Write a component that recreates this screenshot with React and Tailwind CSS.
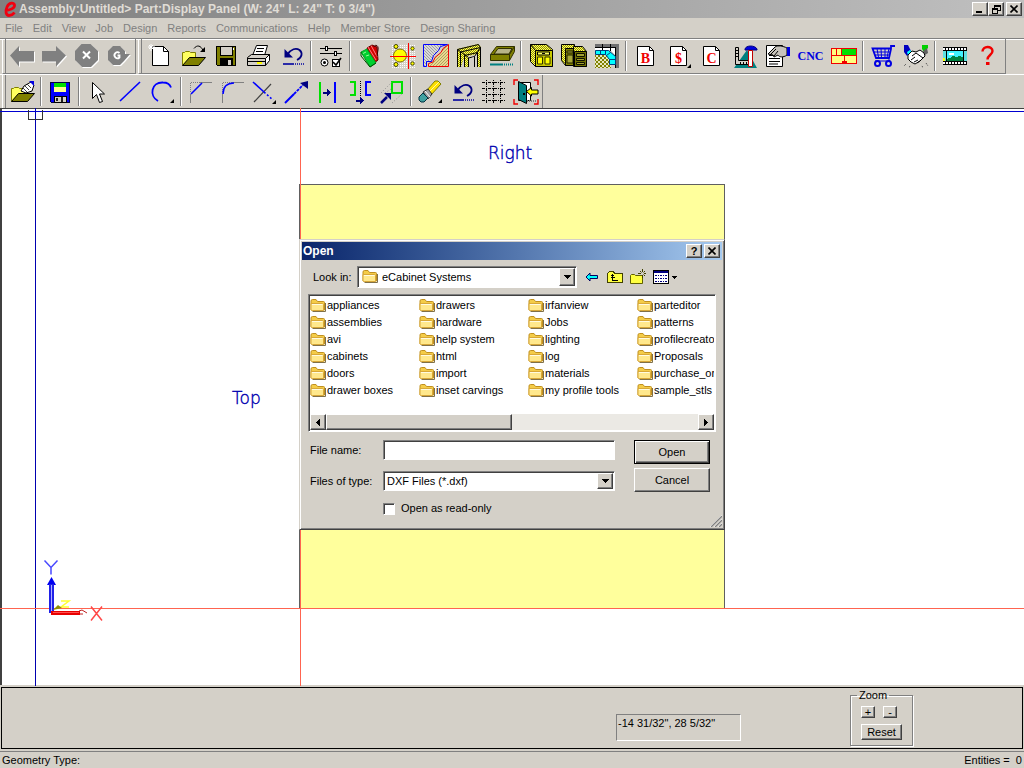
import React from 'react';

const raised =
  'bg-[#d4d0c8] border border-t-white border-l-white border-r-[#404040] border-b-[#404040] shadow-[inset_-1px_-1px_0_#808080]';
const sunken =
  'bg-white border border-t-[#808080] border-l-[#808080] border-r-white border-b-white shadow-[inset_1px_1px_0_#404040]';

function Icon({ children, smooth }) {
  return (
    <svg
      viewBox="0 0 26 26"
      className="size-[26px] shrink-0"
      fill="none"
      shapeRendering={smooth ? 'auto' : 'crispEdges'}
      aria-hidden="true"
    >
      {children}
    </svg>
  );
}

function Disabled({ d, children }) {
  return (
    <Icon smooth>
      <path d={d} fill="#fff" transform="translate(1 1)" />
      <path d={d} fill="#808080" />
      {children}
    </Icon>
  );
}

const UndoIcon = (
  <Icon smooth>
    <path d="M5.500 6v8.500h8.500z" fill="#000080" />
    <path d="M8.500 11.500C12 6 17 4.500 20.500 7c3.500 3 2.500 7.500-2.500 10" stroke="#000080" strokeWidth="1.800" />
    <path d="M4 21h11" stroke="#0000a0" strokeWidth="1.600" />
    <path d="M16 21h9" stroke="#0000a0" strokeWidth="1.600" strokeDasharray="1 1" />
  </Icon>
);

function PageIcon({ letter, drop }) {
  return (
    <Icon smooth>
      <path d="M4.500 3.500h12l4 4v15h-16z" fill="#fff" stroke="#000" />
      <path d="M16.500 3.500v4h4" stroke="#000" />
      <text
        x="12.500"
        y="19.500"
        textAnchor="middle"
        fill="#f00000"
        className="font-['Liberation_Serif',serif] text-[14px] font-bold"
      >
        {letter}
      </text>
      {drop && <path d="M25 21v4h-4z" fill="#000" />}
    </Icon>
  );
}

const navTools = [
  ['Back', <Disabled d="M1 12.500L10 3v5h15v10.500H10v5z" />],
  ['Forward', <Disabled d="M25 12.500L15 3v5H1v10.500h14v5z" />],
  [
    'Stop',
    <Disabled d="M8.500 1h9L25 8v9l-7 7H9l-7-7V8z">
      <path d="M10 8.500l7 7M17 8.500l-7 7" stroke="#fff" strokeWidth="2" />
    </Disabled>,
  ],
  [
    'Refresh',
    <Disabled d="M8 3h7l5 5v3h5l-6 7-4 4H8l-5-5V8z">
      <path d="M14.500 10a3 3 0 1 0 0 4.500v-2h-2" stroke="#fff" strokeWidth="1.800" />
    </Disabled>,
  ],
];

const OpenBase = (
  <>
    <path d="M2.500 22.500v-13h2l1-1h4l1 1h5v5" fill="#ffff60" stroke="#808000" />
    <path d="M2.500 22.500l7-8h16l-7 8z" fill="#808000" stroke="#000" />
  </>
);

const mainTools = [
  [
    'New',
    <Icon smooth>
      <path d="M5.500 3.500h11l5 5v14h-16z" fill="#fff" stroke="#000" />
      <path d="M16.500 3.500v5h5" stroke="#000" />
      <path d="M4 1v7M1 4h7M2 2l4 4M6 2L2 6" stroke="#fff" />
    </Icon>,
  ],
  [
    'Open',
    <Icon smooth>
      {OpenBase}
      <path d="M14 5.500c3-4 7-3 9 2" stroke="#000" />
      <path d="M25 4v5h-5z" fill="#000" />
    </Icon>,
  ],
  [
    'Save',
    <Icon>
      <path d="M3.500 3.500h19v19h-18l-1-1z" fill="#808000" stroke="#000" />
      <path d="M7 3h12v9H7z" fill="#d4d0c8" stroke="#000" />
      <path d="M7 15h13v8H7z" fill="#000" />
      <path d="M15 17h3v5h-3z" fill="#d4d0c8" />
      <path d="M20 5h1v2h-1z" fill="#fff" />
    </Icon>,
  ],
  [
    'Print',
    <Icon smooth>
      <path d="M6.500 12.500l4-10h11l-3 10z" fill="#fff" stroke="#000" />
      <path d="M11 5.500h7M10 8.500h7" stroke="#000" />
      <path d="M1.500 14.500l4-3h18l-4 4v7h-18z" fill="#d4d0c8" stroke="#000" />
      <path d="M23.500 11.500v6l-4 5v-7zM1.500 15.500h18" fill="#fff" stroke="#000" />
      <path d="M2 18.500h17" stroke="#000" />
      <path d="M11 19h5v2h-5z" fill="#ff0" />
    </Icon>,
  ],
  ['Undo', UndoIcon],
  null,
  [
    'Options',
    <Icon>
      <path d="M2 5.500h22M2 10.500h22" stroke="#000" />
      <path d="M7.500 3.500h2v4h-2zM16.500 8.500h2v4h-2z" fill="#fff" stroke="#000" />
      <g shapeRendering="auto">
        <circle cx="6.500" cy="19.500" r="3.500" fill="#fff" stroke="#000" />
        <circle cx="6.500" cy="19.500" r="1.500" fill="#000" />
      </g>
      <path d="M14.500 16.500h7v7h-7z" fill="#fff" stroke="#000" />
      <path d="M15 19l3 3 5-7" stroke="#000" strokeWidth="1.600" shapeRendering="auto" />
    </Icon>,
  ],
  null,
  [
    'Materials',
    <Icon smooth>
      <path d="M10 5l5-3 5 2 1 13-5 4z" fill="#d00000" stroke="#600" />
      <path d="M11 4l8 13M14 2.500l6 11" stroke="#ff8080" />
      <path d="M17 4c1-3 5-2 4 3l-1 6" stroke="#400" />
      <path d="M4 9l6-3 9 14-6 4z" fill="#00d030" stroke="#00a020" />
      <path d="M4 9v4l9 11 6-4" stroke="#005000" />
      <path d="M6 10.500l3-1.500M9 13l3-1" stroke="#90ff90" />
    </Icon>,
  ],
  [
    'Hardware',
    <Icon smooth>
      <path d="M1 1h24v24H1z" fill="url(#dots)" />
      <circle cx="10" cy="12.500" r="6.500" fill="#ff0" stroke="#807000" />
      <circle cx="6" cy="3.500" r="2" fill="#ff0" stroke="#404000" />
      <circle cx="6" cy="21.500" r="2" fill="#ff0" stroke="#404000" />
      <circle cx="22.500" cy="5.500" r="1.700" fill="#ff0" stroke="#404000" />
      <circle cx="22.500" cy="20.500" r="1.700" fill="#ff0" stroke="#404000" />
      <path d="M18.500 0v26M0 13.500h26" stroke="#f00" />
    </Icon>,
  ],
  [
    'Profile',
    <Icon smooth>
      <path d="M.500 1.500h24l-7 2-2 4-5 5-2 6h-5v5h-3z" fill="url(#hatchGray)" stroke="#0000ff" />
      <path d="M25.500 1.500v22H5.500V20.500l4.500-1.500 2-4.500 6-5 2-4z" fill="url(#hatchTan)" stroke="#f00000" />
    </Icon>,
  ],
  [
    'Doors',
    <Icon smooth>
      <path d="M1 6L22 1l3 3v20h-4V11l-9 2v11H8v-9L5 24H2z" fill="url(#hatchYellow)" />
      <path d="M1.500 24V6.500l21-5M4.500 24V9l20-4.500V24M8.500 24V12.500l13-3V24M12.500 24v-9l6-1.500V24M1.500 6.500l11 8M22.500 1.500l2 3-6 9" stroke="#000" />
      <path d="M13 16l5-2v10h-5z" fill="#d4d0c8" />
    </Icon>,
  ],
  [
    'Drawer',
    <Icon smooth>
      <path d="M1.500 11.500l6-8h18v5l-5 9h-19z" fill="#808000" stroke="#303000" />
      <path d="M5 11l4-5.500h14L20 11z" fill="#b8b488" stroke="#303000" />
      <path d="M1.500 11.500h19v6M20.500 11.500l5-8" stroke="#303000" />
      <path d="M1 21.500h13" stroke="#008080" strokeWidth="2" />
      <path d="M15 21.500h10" stroke="#008080" strokeWidth="2" strokeDasharray="1 1" />
    </Icon>,
  ],
  null,
  [
    'Cabinet',
    <Icon smooth>
      <path d="M2.500 1.500h16l6 5v17h-17l-5-5z" fill="url(#hatchYellow)" stroke="#000" />
      <path d="M7.500 7.500h17v16h-17z" fill="#c8c800" stroke="#000" />
      <path d="M2.500 1.500l5 6" stroke="#000" />
      <path d="M9.500 9h12v3h-12z" fill="#ffff60" stroke="#000" />
      <path d="M9.500 14h5v7h-5zM17 14h5v7h-5z" fill="#ff0" stroke="#303000" />
      <path d="M14 10.500h3" stroke="#000" />
    </Icon>,
  ],
  [
    'Assembly',
    <Icon smooth>
      <path d="M.500 1.500h13v21h-9l-4-5z" fill="url(#hatchYellow)" stroke="#000" />
      <path d="M4.500 5.500h9v17h-9z" fill="#808000" stroke="#000" />
      <path d="M6 8h6v2H6zM6 12h6v8H6z" fill="#a8a838" stroke="#202000" />
      <path d="M12.500 3.500h9l4 5v15h-13z" fill="url(#hatchYellow)" stroke="#000" />
      <path d="M13.500 8.500h12v15h-12z" fill="#707000" stroke="#000" />
      <path d="M15.500 10.500h8v3h-8zM15.500 15.500h8v2h-8zM15.500 19.500h8v2h-8z" fill="#a0a030" stroke="#101000" />
    </Icon>,
  ],
  [
    'Room layout',
    <Icon>
      <path d="M1 11h16v14H1z" fill="url(#checkOlive)" />
      <path d="M1 1h24v24h-3V4H1z" fill="#707070" />
      <path d="M1 4h21v20h-1V12l-5-5H1z" fill="#fff" />
      <path d="M1 4.500h20.500v20M8.500 1v6M16.500 1v7" stroke="#000" />
      <g shapeRendering="auto">
        <path d="M1.500 7.500h13l7 6v8h-6v-5l-4-5h-10z" fill="#00ffff" stroke="#004080" />
        <path d="M6.500 7v4M11.500 7.500v4M12.500 12.500l4-3M15.500 16.500h6" stroke="#004080" />
      </g>
    </Icon>,
  ],
  null,
  ['Buy list', <PageIcon letter="B" />],
  ['Cost', <PageIcon letter="$" drop />],
  ['Cut list', <PageIcon letter="C" />],
  [
    'Drawings',
    <Icon smooth>
      <path d="M2 25L15 7l10 18z" fill="#008080" />
      <path d="M3.500 4.500h3v13h10v4h-13z" fill="#d4d0c8" stroke="#000" />
      <path d="M4 7.500h2M4 10.500h2M4 13.500h2M8.500 21v-2M11.500 21v-2M14.500 21v-2" stroke="#000" />
      <path d="M13 6c1-4 10-4 12 0v1H13z" fill="#0000e0" stroke="#000080" />
      <path d="M16.500 7.500h4v16h-4z" fill="#fff" stroke="#c00000" />
    </Icon>,
  ],
  [
    'Sign off',
    <Icon smooth>
      <path d="M1.500 2.500h16v21h-16z" fill="#fff" stroke="#000" />
      <path d="M4 12.500h6M4 15.500h11M4 18.500h11M4 21h9" stroke="#000" />
      <path d="M3 11l7-7c3-2 8-1 12 1v7c-4 3-8 2-9 0l-4 2-1-2z" fill="#c8c4bc" stroke="#000" />
      <path d="M6 11l5-5M9 13l4-5" stroke="#000" />
      <path d="M22 4h3v9h-3z" fill="#0000e0" />
    </Icon>,
  ],
  [
    'CNC',
    <span className="font-['Liberation_Serif',serif] text-[12px] leading-[26px] font-bold text-[#0000e0]">CNC</span>,
  ],
  [
    'Nesting',
    <Icon>
      <path d="M.500 5.500h25v15H.500z" fill="#ffff80" stroke="#f00000" />
      <path d="M11 6h14v6H11z" fill="#00e000" />
      <path d="M.500 5.500h25v15H.500zM0 12.500h26M5.500 5v7M10.500 5v7M13.500 12v8" stroke="#f00000" />
      <path d="M11 18h5v3h-5z" fill="#f00000" />
    </Icon>,
  ],
  null,
  [
    'Store',
    <Icon smooth>
      <path d="M25 3h-4v3l-2 9H6L2.500 5.500H21" stroke="#0000e0" strokeWidth="1.800" />
      <path d="M4 9h16M5 12h14M7 5.500l1.500 9M11 5.500l.500 9M15 5.500v9M19 5.500l-2 9M18 15l2 3H5" stroke="#0000e0" />
      <circle cx="7.500" cy="20.500" r="2.500" stroke="#0000e0" strokeWidth="2" />
      <circle cx="18.500" cy="20.500" r="2.500" stroke="#0000e0" strokeWidth="2" />
    </Icon>,
  ],
  [
    'Partners',
    <Icon smooth>
      <path d="M1 2h4l3 6-4 5-3-4z" fill="#0000c0" />
      <path d="M4 9l3-2 2 2-4 3z" fill="#00ffff" />
      <path d="M19 2h6v3l-4 4-2-3z" fill="#00d000" />
      <path d="M20 8l4-3 1 5-3 2z" fill="#606060" />
      <path d="M5 12l4-4 4 1 4-2 4 3 1 3-5 5-5 3-4-2-3-3z" fill="#fff" stroke="#000" />
      <path d="M9 13l4-3 7 5M8 17l4-3M11 19l4-2M14 20l3-2" stroke="#000" />
      <path d="M3 21l-2 2M23 20l2 3M6 24l2-1M20 24l-2-1" stroke="#404040" strokeDasharray="1 1" />
    </Icon>,
  ],
  null,
  [
    'Videos',
    <Icon>
      <path d="M1 4h24v18H1z" fill="#000" />
      <path d="M1 6h24M1 20h24" stroke="#fff" strokeWidth="2" strokeDasharray="2 1" />
      <path d="M1 8h3v10H1zM22 8h3v10h-3z" fill="#60e0e0" />
      <path d="M4 8h18v10H4z" fill="#40f0ff" />
      <path d="M4 18v-2l4-1 3-2 3 1 4-1 4 2v3z" fill="#008040" />
      <path d="M7 10h5v2H7z" fill="#fff" />
      <path d="M4.500 8v10M21.500 8v10" stroke="#000" />
      <path d="M1 15h2v3H1z" fill="#ff0" />
    </Icon>,
  ],
  [
    'Help contents',
    <Icon smooth>
      <path d="M7.500 8.500C7.500 2.500 17.500 2.500 17.500 8c0 4-5 4-5 8.500" stroke="#f00000" strokeWidth="2.400" />
      <path d="M11 19h3.500v3H11z" fill="#f00000" />
    </Icon>,
  ],
];

const partTools = [
  [
    'Import',
    <Icon smooth>
      {OpenBase}
      <path d="M12 12l3-5 7-4 3 3-2 6-6 2z" fill="#fff" stroke="#000" />
      <path d="M14 9l4 4M16 7l4 4M18 5l4 4" stroke="#404040" />
      <path d="M20 2l5 0v5z" fill="#0000e0" />
    </Icon>,
  ],
  null,
  [
    'Save part',
    <Icon>
      <path d="M3.500 3.500h19v20h-18l-1-1z" fill="#0000ff" stroke="#000040" />
      <path d="M7 4h12v4H7z" fill="#00e000" />
      <path d="M7 8h12v5H7z" fill="#ffff90" />
      <path d="M7 17h12v6H7z" fill="#d4d0c8" stroke="#000" />
      <path d="M9 19h2v3H9zM14 18h2v5h-2z" fill="#202020" />
    </Icon>,
  ],
  null,
  [
    'Select',
    <Icon smooth>
      <path d="M7.500 3.500v16l4-4 3 8 3-1-3-7.500h5z" fill="#fff" stroke="#000" />
    </Icon>,
  ],
  ['Line', <Icon smooth><path d="M3 22L23 3" stroke="#0000ff" strokeWidth="1.600" /></Icon>],
  [
    'Arc',
    <Icon smooth>
      <path d="M9 22C0 17 2 3 14 3.500c4 0 7 2 8 5" stroke="#0000ff" strokeWidth="1.800" />
      <path d="M25 20v4h-4z" fill="#000" />
    </Icon>,
  ],
  null,
  [
    'Chamfer',
    <Icon>
      <path d="M13 3.500h12M3.500 15v9" stroke="#808080" />
      <path d="M3.500 13V3.500H13" stroke="#808080" strokeDasharray="1 1" />
      <path d="M4 15L15 4" stroke="#0000ff" strokeWidth="1.600" shapeRendering="auto" />
    </Icon>,
  ],
  [
    'Fillet',
    <Icon>
      <path d="M13 3.500h12M3.500 15v9" stroke="#808080" />
      <path d="M3.500 13V3.500H13" stroke="#808080" strokeDasharray="1 1" />
      <path d="M4 15C4 8 8 4 15 4" stroke="#0000ff" strokeWidth="1.600" shapeRendering="auto" />
    </Icon>,
  ],
  [
    'Trim',
    <Icon smooth>
      <path d="M3 23L20 5" stroke="#404040" strokeWidth="1.200" />
      <path d="M2 3l11 10" stroke="#0000ff" strokeWidth="1.600" />
      <path d="M13 13l9 8" stroke="#0000ff" strokeWidth="1.600" strokeDasharray="2 2" />
      <path d="M25 21v4h-4z" fill="#000" />
    </Icon>,
  ],
  [
    'Extend',
    <Icon smooth>
      <path d="M2 24l9-9" stroke="#0000ff" strokeWidth="2" />
      <path d="M11 15l9-9" stroke="#0000ff" strokeWidth="1.800" strokeDasharray="3 1" />
      <path d="M25 2v8l-8-6z" fill="#000080" />
    </Icon>,
  ],
  [
    'Offset',
    <Icon>
      <path d="M5 3v21" stroke="#00e000" strokeWidth="2" />
      <path d="M20 3v21" stroke="#0000ff" strokeWidth="2" />
      <path d="M8 13.500h5" stroke="#000080" strokeWidth="2" />
      <path d="M12 10v7l4-3.500z" fill="#000080" />
    </Icon>,
  ],
  [
    'Mirror',
    <Icon>
      <path d="M3 3h5v13H3" stroke="#00e000" strokeWidth="2" />
      <path d="M24 3h-5v13h5" stroke="#0000ff" strokeWidth="2" />
      <path d="M13.500 2v17" stroke="#000" strokeDasharray="1 1" />
      <path d="M9 21.500h5" stroke="#000080" strokeWidth="2" />
      <path d="M13 18v7l4-3.500z" fill="#000080" />
    </Icon>,
  ],
  [
    'Move',
    <Icon>
      <path d="M13 3h10v11H13z" stroke="#00e000" strokeWidth="2" />
      <g shapeRendering="auto">
        <path d="M2 14L13 3M13 24l11-10M6 14l6-4" stroke="#909090" strokeDasharray="1 2" />
        <path d="M2 24l6-6" stroke="#000080" strokeWidth="2.500" />
        <path d="M12 14v7l-7-7z" fill="#000080" />
      </g>
    </Icon>,
  ],
  null,
  [
    'Erase',
    <Icon smooth>
      <path d="M10 11L18 2h3l3 3-10 11z" fill="#ffe000" stroke="#808000" />
      <path d="M12 13L22 3" stroke="#fff8a0" />
      <path d="M6 13l5-3 4 5-4 5z" fill="#a0a0a0" stroke="#303030" />
      <path d="M8 12l5 6" stroke="#fff" />
      <path d="M2 18l4-4 5 5-4 4H4l-2-2z" fill="#40a0a0" stroke="#003040" />
      <path d="M25 20v4h-4z" fill="#000" />
    </Icon>,
  ],
  ['Undo edit', UndoIcon],
  [
    'Grid',
    <Icon>
      <path d="M1 3.500h24M1 9.500h24M1 15.500h24M1 21.500h24" stroke="#000" strokeDasharray="3 1 1 1" />
      <path d="M5.500 1v24M12.500 1v24M19.500 1v24" stroke="#000" strokeDasharray="1 1 3 1" />
    </Icon>,
  ],
  [
    'Exit',
    <Icon smooth>
      <path d="M1 6V1h4M21 1h4v5M25 20v5h-4M5 25H1v-5" stroke="#f00000" strokeWidth="1.400" />
      <path d="M5.500 3.500h12v18h-12z" fill="#fff" stroke="#000" />
      <path d="M5.500 2.500l8 4v18l-8-4z" fill="#008080" stroke="#000" />
      <path d="M10 14h2v2h-2z" fill="#000" />
      <path d="M13.500 12.500l5-4v2.500h6.500v4h-6.500V17z" fill="#ff0" stroke="#000" />
      <path d="M14 22h9" stroke="#808080" strokeDasharray="1 1" strokeWidth="2" />
    </Icon>,
  ],
];

function Tools({ items, width }) {
  return items.map((item, i) =>
    item ? (
      <button key={i} aria-label={item[0]} className={`${width} flex shrink-0 items-center justify-center overflow-hidden`}>
        {item[1]}
      </button>
    ) : (
      <span key={i} className="flex w-1.5 shrink-0 justify-center self-stretch py-0.5">
        <span className="w-0.5 border-r border-l border-r-white border-l-[#808080]" />
      </span>
    ),
  );
}

function Folder() {
  return (
    <svg viewBox="0 0 16 16" className="size-4 shrink-0" aria-hidden="true">
      <path d="M1 12V3Q1 1.500 2.500 1.500H6L7.500 3.500H13.500Q14.500 3.500 14.500 4.500V12Z" fill="#f4cc48" stroke="#c09020" />
      <path d="M1 5.500H12.500Q13.500 5.500 13.500 6.500V12.500H2.500Q1 12.500 1 11.500Z" fill="#ffe88c" stroke="#d8a838" />
      <path d="M2 6.500h10.500" stroke="#fffbe0" />
      <path d="M15.500 5v8.500H2.500" stroke="#807048" fill="none" />
    </svg>
  );
}

const folders = [
  'appliances', 'assemblies', 'avi', 'cabinets', 'doors', 'drawer boxes',
  'drawers', 'hardware', 'help system', 'html', 'import', 'inset carvings',
  'irfanview', 'Jobs', 'lighting', 'log', 'materials', 'my profile tools',
  'parteditor', 'patterns', 'profilecreato', 'Proposals', 'purchase_or', 'sample_stls',
];

const menus = ['File', 'Edit', 'View', 'Job', 'Design', 'Reports', 'Communications', 'Help', 'Member Store', 'Design Sharing'];

function DropArrow() {
  return (
    <span className={`pointer-events-none absolute inset-y-px right-px flex w-4 items-center justify-center ${raised}`}>
      <svg viewBox="0 0 7 4" className="h-1 w-[7px]" shapeRendering="crispEdges" aria-hidden="true">
        <path d="M0 0h7L3.500 4z" />
      </svg>
    </span>
  );
}

function OpenDialog() {
  return (
    <form
      role="dialog"
      aria-label="Open"
      onSubmit={(e) => e.preventDefault()}
      className="absolute top-[131px] left-[299px] w-[426px] border border-t-[#d4d0c8] border-l-[#d4d0c8] border-r-[#404040] border-b-[#404040] bg-[#d4d0c8] p-0.5 pb-3.5 shadow-[inset_1px_1px_0_#fff,inset_-1px_-1px_0_#808080]"
    >
      <div className="flex h-[18px] items-center bg-linear-to-r from-[#0a246a] to-[#a6caf0] pr-0.5 pl-px">
        <h2 className="flex-1 text-[12px] font-bold text-white">Open</h2>
        <div className="flex gap-0.5">
          <button type="button" aria-label="Help" className={`h-3.5 w-4 text-[11px] leading-[11px] font-bold ${raised}`}>?</button>
          <button type="button" aria-label="Close" className={`flex h-3.5 w-4 items-center justify-center ${raised}`}>
            <svg viewBox="0 0 8 8" className="size-2" aria-hidden="true">
              <path d="M.500 .500l7 7M7.500 .500l-7 7" stroke="#000" strokeWidth="1.600" />
            </svg>
          </button>
        </div>
      </div>

      <div className="mt-1.5 flex items-center pl-[11px]">
        <label htmlFor="lookin" className="w-11">Look in:</label>
        <div className={`relative flex h-[22px] w-[220px] items-center pl-1 ${sunken}`}>
          <Folder />
          <select id="lookin" className="h-full flex-1 appearance-none bg-transparent pl-1 outline-none">
            <option>eCabinet Systems</option>
          </select>
          <DropArrow />
        </div>
        <div className="ml-[7px] flex items-center gap-[7px]">
          <button type="button" aria-label="Go back" className="size-4">
            <svg viewBox="0 0 16 16" className="size-4" aria-hidden="true">
              <path d="M2 8l4-4v2.500h7.500v3H6V12z" fill="#00ffff" stroke="#000060" />
            </svg>
          </button>
          <button type="button" aria-label="Up one level" className="size-4">
            <svg viewBox="0 0 16 16" className="size-4" shapeRendering="crispEdges" aria-hidden="true">
              <path d="M.500 13.500v-9l2-2h4l1 2h8v9z" fill="#ffff40" stroke="#404000" />
              <path d="M5.500 7v4.500h5M3.500 8.500h4" stroke="#000" fill="none" />
              <path d="M5 5h1v1H5zM4 6h3v1H4z" />
            </svg>
          </button>
          <button type="button" aria-label="New folder" className="size-4">
            <svg viewBox="0 0 16 16" className="size-4" aria-hidden="true">
              <path d="M.500 14.500v-8l1-1h3l1 1h7v8z" fill="#ffff40" stroke="#606000" />
              <path d="M12.500 0v3M12.500 6v3M8 4.500h3M14 4.500h2M10 2l1.500 1.500M15 2l-1.500 1.500M15 7l-1.500-1.500" stroke="#404000" />
            </svg>
          </button>
          <button type="button" aria-label="Views" className="h-4 w-6">
            <svg viewBox="0 0 24 16" className="h-4 w-6" shapeRendering="crispEdges" aria-hidden="true">
              <path d="M.500 1.500h15v13H.500z" fill="#fff" stroke="#000" />
              <path d="M1 2h14v2H1z" fill="#000080" />
              <path d="M2 6.500h12M2 9.500h12M2 12.500h12" stroke="#000080" strokeDasharray="2 1 1 1" />
              <path d="M18 7h6l-3 3z" />
            </svg>
          </button>
        </div>
      </div>

      <div className={`mx-1.5 mt-1.5 p-px pt-0.5 ${sunken}`}>
        <ul className="grid auto-cols-[109px] grid-flow-col grid-rows-6 overflow-hidden">
          {folders.map((name) => (
            <li key={name} className="h-[17px]">
              <button type="button" className="flex h-[17px] items-center gap-px whitespace-nowrap">
                <Folder />
                {name}
              </button>
            </li>
          ))}
        </ul>
        <div className="mt-[15px] flex h-4 bg-[#ebe9e4]" role="group" aria-label="Horizontal scroll">
          <button type="button" aria-label="Scroll left" className={`flex w-4 items-center justify-center ${raised}`}>
            <svg viewBox="0 0 4 7" className="h-[7px] w-1" shapeRendering="crispEdges" aria-hidden="true"><path d="M4 0v7L0 3.500z" /></svg>
          </button>
          <span className={`w-[186px] ${raised}`} />
          <span className="flex-1" />
          <button type="button" aria-label="Scroll right" className={`flex w-4 items-center justify-center ${raised}`}>
            <svg viewBox="0 0 4 7" className="h-[7px] w-1" shapeRendering="crispEdges" aria-hidden="true"><path d="M0 0v7l4-3.500z" /></svg>
          </button>
        </div>
      </div>

      <div className="mt-2 flex justify-between pr-3 pl-2">
        <div className="flex flex-col gap-[11px]">
          <div className="flex items-center">
            <label htmlFor="fname" className="w-[73px]">File name:</label>
            <input id="fname" type="text" className={`h-5 w-[232px] px-1 outline-none ${sunken}`} />
          </div>
          <div className="flex items-center">
            <label htmlFor="ftype" className="w-[73px]">Files of type:</label>
            <div className={`relative flex h-5 w-[232px] ${sunken}`}>
              <select id="ftype" className="h-full flex-1 appearance-none bg-transparent pl-[3px] outline-none">
                <option>DXF Files (*.dxf)</option>
              </select>
              <DropArrow />
            </div>
          </div>
          <label className="flex items-center gap-1.5 pl-[73px]">
            <input type="checkbox" className={`size-3 appearance-none ${sunken}`} />
            Open as read-only
          </label>
        </div>
        <div className="flex w-[76px] flex-col gap-1">
          <button type="submit" className="h-6 border border-black bg-[#d4d0c8] shadow-[inset_1px_1px_0_#fff,inset_-1px_-1px_0_#404040,inset_-2px_-2px_0_#808080]">
            Open
          </button>
          <button type="button" className={`h-6 ${raised}`}>Cancel</button>
        </div>
      </div>
      <svg viewBox="0 0 12 12" className="absolute right-0.5 bottom-0.5 size-3" aria-hidden="true">
        <path d="M0 12L12 0M4 12l8-8M8 12l4-4" stroke="#fff" />
        <path d="M1 12L12 1M5 12l7-7M9 12l3-3" stroke="#808080" strokeWidth="1.300" />
      </svg>
    </form>
  );
}

function Drawing() {
  return (
    <svg className="absolute inset-0 h-full w-full" shapeRendering="crispEdges" role="img" aria-label="Panel drawing">
      <defs>
        <pattern id="dots" width="2" height="2" patternUnits="userSpaceOnUse">
          <path d="M0 0h1v1H0z" fill="#fff" />
        </pattern>
        <pattern id="hatchGray" width="3" height="3" patternUnits="userSpaceOnUse">
          <path d="M0 0h3v3H0z" fill="#d8d8d8" />
          <path d="M0 0h1v1H0zM1 1h1v1H1zM2 2h1v1H2z" fill="#a0a0a0" />
        </pattern>
        <pattern id="hatchTan" width="3" height="3" patternUnits="userSpaceOnUse">
          <path d="M0 0h3v3H0z" fill="#e8d890" />
          <path d="M2 0h1v1H2zM1 1h1v1H1zM0 2h1v1H0z" fill="#b0a060" />
        </pattern>
        <pattern id="hatchYellow" width="2" height="2" patternUnits="userSpaceOnUse">
          <path d="M0 0h2v2H0z" fill="#ffff60" />
          <path d="M0 0h1v1H0zM1 1h1v1H1z" fill="#909000" />
        </pattern>
        <pattern id="checkOlive" width="4" height="4" patternUnits="userSpaceOnUse">
          <path d="M0 0h4v4H0z" fill="#e8e8c0" />
          <path d="M0 0h2v2H0zM2 2h2v2H2z" fill="#808000" />
        </pattern>
      </defs>
      <path d="M299.500 76.500H724V500.500H299.500z" fill="#ffff9c" stroke="#606060" />
      <path d="M35.500 0V2000" stroke="#0000b0" />
      <path d="M0 3.500H5000" stroke="#0000d0" />
      <path d="M28.500 2v9h14V2" stroke="#303030" fill="none" />
      <path d="M300.500 0V2000M0 500.500H5000" stroke="#ff6450" />
      <g shapeRendering="auto" fill="none">
        <path d="M44.500 452.500l6.500 7 6.500-7M51 459.500v7" stroke="#4848ff" strokeWidth="1.500" />
        <path d="M51.500 469l4.500 8h-9z" fill="#0000f0" />
        <path d="M51.500 476v29" stroke="#2020e8" strokeWidth="5" />
        <path d="M51.500 477v26" stroke="#b0b0ff" />
        <path d="M61 493h8l-8 6h8" stroke="#ffff30" strokeWidth="1.500" />
        <path d="M53 502l5-5 4 3z" fill="#909000" />
        <path d="M51 505h29" stroke="#e80000" strokeWidth="4" />
        <path d="M53 504.500h26" stroke="#ff5050" />
        <path d="M79 503l3-1 5 3M80 506h3" stroke="#c02020" />
        <path d="M91 498.500l11 14M102 498.500l-11 14" stroke="#ff4848" strokeWidth="1.500" />
      </g>
      <g fill="#0000b0" stroke="#0000b0" strokeWidth=".4" className="font-['DejaVu_Sans',sans-serif] text-[17px] font-extralight">
        <text x="488" y="51">Right</text>
        <text x="232" y="296">Top</text>
      </g>
    </svg>
  );
}

export default function App() {
  return (
    <div className="flex min-h-screen flex-col bg-[#d4d0c8] font-['Liberation_Sans',Arial,sans-serif] text-[11px] leading-[13px] text-black">
      <header className="flex h-[18px] items-center bg-linear-to-r from-[#808080] to-[#c0c0c0] pr-0.5 pl-0.5">
        <svg viewBox="0 0 16 16" className="size-4" aria-hidden="true">
          <path d="M3 9.500C8 9.500 13 7 12.500 4 12 1 7 1.500 5 6c-2 4.500-1 8.500 2 8.500 2 0 4-1 5.500-3" fill="none" stroke="#f00010" strokeWidth="2.800" />
        </svg>
        <h1 className="ml-px flex-1 text-[12px] font-bold text-[#e0ddd6]">
          Assembly:Untitled&gt; Part:Display Panel (W: 24&quot; L: 24&quot; T: 0 3/4&quot;)
        </h1>
        <div className="flex">
          <button aria-label="Minimize" className={`flex h-3.5 w-4 items-end pb-0.5 pl-[3px] ${raised}`}>
            <span className="h-0.5 w-1.5 bg-black" />
          </button>
          <button aria-label="Restore" className={`flex h-3.5 w-4 items-center justify-center ${raised}`}>
            <svg viewBox="0 0 9 9" className="size-[9px]" shapeRendering="crispEdges" fill="none" stroke="#000" aria-hidden="true">
              <path d="M2.500 3V.500h6v5H6M2 1.500h7M.500 3.500h5v5h-5zM0 4.500h6" />
            </svg>
          </button>
          <button aria-label="Close window" className={`ml-0.5 flex h-3.5 w-4 items-center justify-center ${raised}`}>
            <svg viewBox="0 0 8 8" className="size-2" aria-hidden="true">
              <path d="M.500 .500l7 7M7.500 .500l-7 7" stroke="#000" strokeWidth="1.600" />
            </svg>
          </button>
        </div>
      </header>

      <nav className="flex h-5 items-center gap-2.5 pl-[5px] whitespace-nowrap text-[#808080]">
        {menus.map((m) => (
          <button key={m}>{m}</button>
        ))}
      </nav>

      <div className="flex h-9 border-t border-[#808080] shadow-[inset_0_1px_0_#fff]">
        <div className="ml-0.5 flex border-x border-b border-l-white border-r-[#808080] border-b-[#808080] pr-px pl-0.5">
          <span className="w-px border-l border-[#808080]" />
          <Tools items={navTools} width="w-8" />
        </div>
        <div className="ml-0.5 flex border-x border-b border-l-white border-r-[#808080] border-b-[#808080] pr-px pl-0.5">
          <span className="mr-px w-px border-l border-[#808080]" />
          <Tools items={mainTools} width="w-[33px]" />
        </div>
      </div>

      <div className="flex h-[34px] border-t border-white">
        <div className="ml-0.5 flex border-x border-l-white border-r-[#808080] pl-0.5">
          <span className="w-px border-l border-[#808080]" />
          <Tools items={partTools} width="w-8" />
        </div>
      </div>

      <main className="relative min-h-[440px] flex-1 border-t border-l-2 border-[#404040] bg-white">
        <div className="absolute -inset-y-px right-0 -left-0.5 overflow-hidden">
          <Drawing />
          <OpenDialog />
        </div>
      </main>

      <section className="mx-px mt-0.5 mb-0.5 flex h-[62px] border border-black pr-[109px]">
        <output className="mt-[26px] ml-auto h-[27px] w-[125px] border border-t-[#808080] border-l-[#808080] border-r-white border-b-white pt-0.5 pl-px">
          -14 31/32&quot;, 28 5/32&quot;
        </output>
        <fieldset className="mt-px ml-[109px] h-[57px] w-[62px] border border-[#808080] px-2.5 shadow-[1px_1px_0_#fff,inset_1px_1px_0_#fff]">
          <legend className="-ml-1 px-0.5 leading-[13px]">Zoom</legend>
          <div className="mt-1 flex gap-2">
            <button aria-label="Zoom in" className={`h-3 w-3.5 leading-[9px] ${raised}`}>+</button>
            <button aria-label="Zoom out" className={`h-3 w-3.5 leading-[9px] ${raised}`}>-</button>
          </div>
          <button className={`mt-1.5 h-4 w-[41px] leading-[13px] ${raised}`}>Reset</button>
        </fieldset>
      </section>

      <footer className="flex h-[17px] items-center justify-between border-t border-[#808080] px-0.5">
        <span>Geometry Type:</span>
        <span className="whitespace-pre">Entities =  0</span>
      </footer>
    </div>
  );
}
